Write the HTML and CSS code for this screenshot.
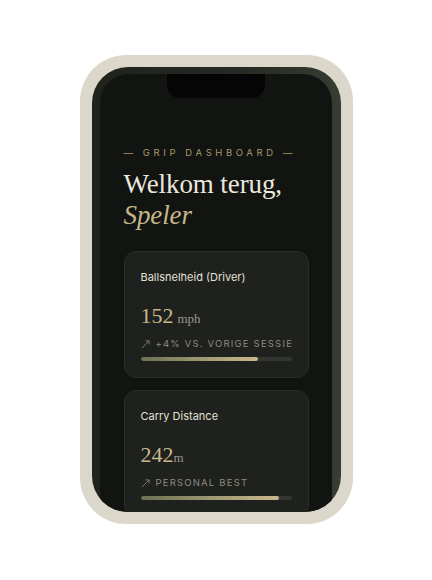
FILE: index.html
```html
<!DOCTYPE html>
<html>
<head>
<meta charset="utf-8">
<link rel="stylesheet" href="styles.css">
</head>
<body>
<div class="stage">
  <div class="frame">
    <div class="body">
      <div class="screen">
        <div class="notch"></div>
        <div class="content">
          <div class="eyebrow">— GRIP DASHBOARD —</div>
          <h1 class="title">Welkom terug,<br><em>Speler</em></h1>
          <div class="card">
            <div class="label">Ballsnelheid (Driver)</div>
            <div class="value"><span class="num">152</span> <span class="unit">mph</span></div>
            <div class="trend"><svg class="arrow" viewBox="0 0 10 10" width="9" height="9"><path d="M1 9 L9 1 M5 1 H9 V5" fill="none" stroke="#8e8b82" stroke-width="0.9"/></svg>+4% VS. VORIGE SESSIE</div>
            <div class="track"><div class="fill" style="width:78%"></div></div>
          </div>
          <div class="card">
            <div class="label">Carry Distance</div>
            <div class="value"><span class="num">242</span><span class="unit">m</span></div>
            <div class="trend"><svg class="arrow" viewBox="0 0 10 10" width="9" height="9"><path d="M1 9 L9 1 M5 1 H9 V5" fill="none" stroke="#8e8b82" stroke-width="0.9"/></svg>PERSONAL BEST</div>
            <div class="track"><div class="fill" style="width:92%"></div></div>
          </div>
        </div>
      </div>
    </div>
  </div>
</div>
</body>
</html>
```
FILE: styles.css
```css
html, body {
  margin: 0;
  padding: 0;
  background: #ffffff;
}
.stage {
  display: flex;
  justify-content: center;
  padding-top: 55px;
}
.frame {
  width: 273px;
  height: 469px;
  box-sizing: border-box;
  padding: 12px;
  background: #dcd7cb;
  border-radius: 46px;
}
.body {
  height: 445px;
  box-sizing: border-box;
  padding: 7px 9px 0 8px;
  background: linear-gradient(90deg, #1f231c 0%, #262a22 60%, #373d32 100%);
  border-radius: 36px;
  overflow: hidden;
}
.screen {
  position: relative;
  height: 520px;
  background: #111410;
  border-radius: 29px 29px 0 0;
}
.notch {
  position: absolute;
  left: 50%;
  top: 0;
  width: 98px;
  height: 24px;
  margin-left: -49px;
  background: #040504;
  border-radius: 0 0 13px 13px;
}
.content {
  padding: 73px 23px 0 24px;
  display: flex;
  flex-direction: column;
}
.eyebrow {
  font-family: Inter, "Liberation Sans", sans-serif;
  font-size: 9.5px;
  letter-spacing: 3.6px;
  color: #a8996c;
  line-height: 12px;
  white-space: nowrap;
}
.title {
  margin: 10px 0 0 0;
  font-family: "Liberation Serif", serif;
  font-weight: normal;
  font-size: 27px;
  line-height: 31px;
  color: #ebe7dd;
  letter-spacing: -0.1px;
}
.title em {
  color: #c6b68a;
  font-style: italic;
}
.card {
  margin-top: 20px;
  background: #1e211d;
  border: 1px solid #2b2f29;
  border-radius: 12px;
  padding: 18px 16px 16px 16px;
  display: flex;
  flex-direction: column;
}
.card + .card {
  margin-top: 12px;
}
.label {
  font-family: Inter, "Liberation Sans", sans-serif;
  font-size: 11px;
  line-height: 14px;
  color: #e4e0d6;
}
.value {
  margin-top: 19px;
  font-family: "Liberation Serif", serif;
  line-height: 26px;
  white-space: nowrap;
}
.num {
  font-size: 22px;
  color: #c9b78a;
}
.unit {
  font-size: 13px;
  color: #9c988d;
}
.trend {
  margin-top: 6px;
  font-family: Inter, "Liberation Sans", sans-serif;
  font-size: 9.5px;
  letter-spacing: 1.2px;
  color: #8e8b82;
  line-height: 12px;
  white-space: nowrap;
  display: flex;
  align-items: center;
}
.arrow {
  margin-right: 6px;
  flex: none;
}
.track {
  margin-top: 7px;
  height: 4px;
  background: #333630;
  border-radius: 2px;
  overflow: hidden;
}
.fill {
  height: 100%;
  background: linear-gradient(90deg, #6b7152 0%, #9c9871 50%, #c9b88b 100%);
  border-radius: 2px;
}
```
